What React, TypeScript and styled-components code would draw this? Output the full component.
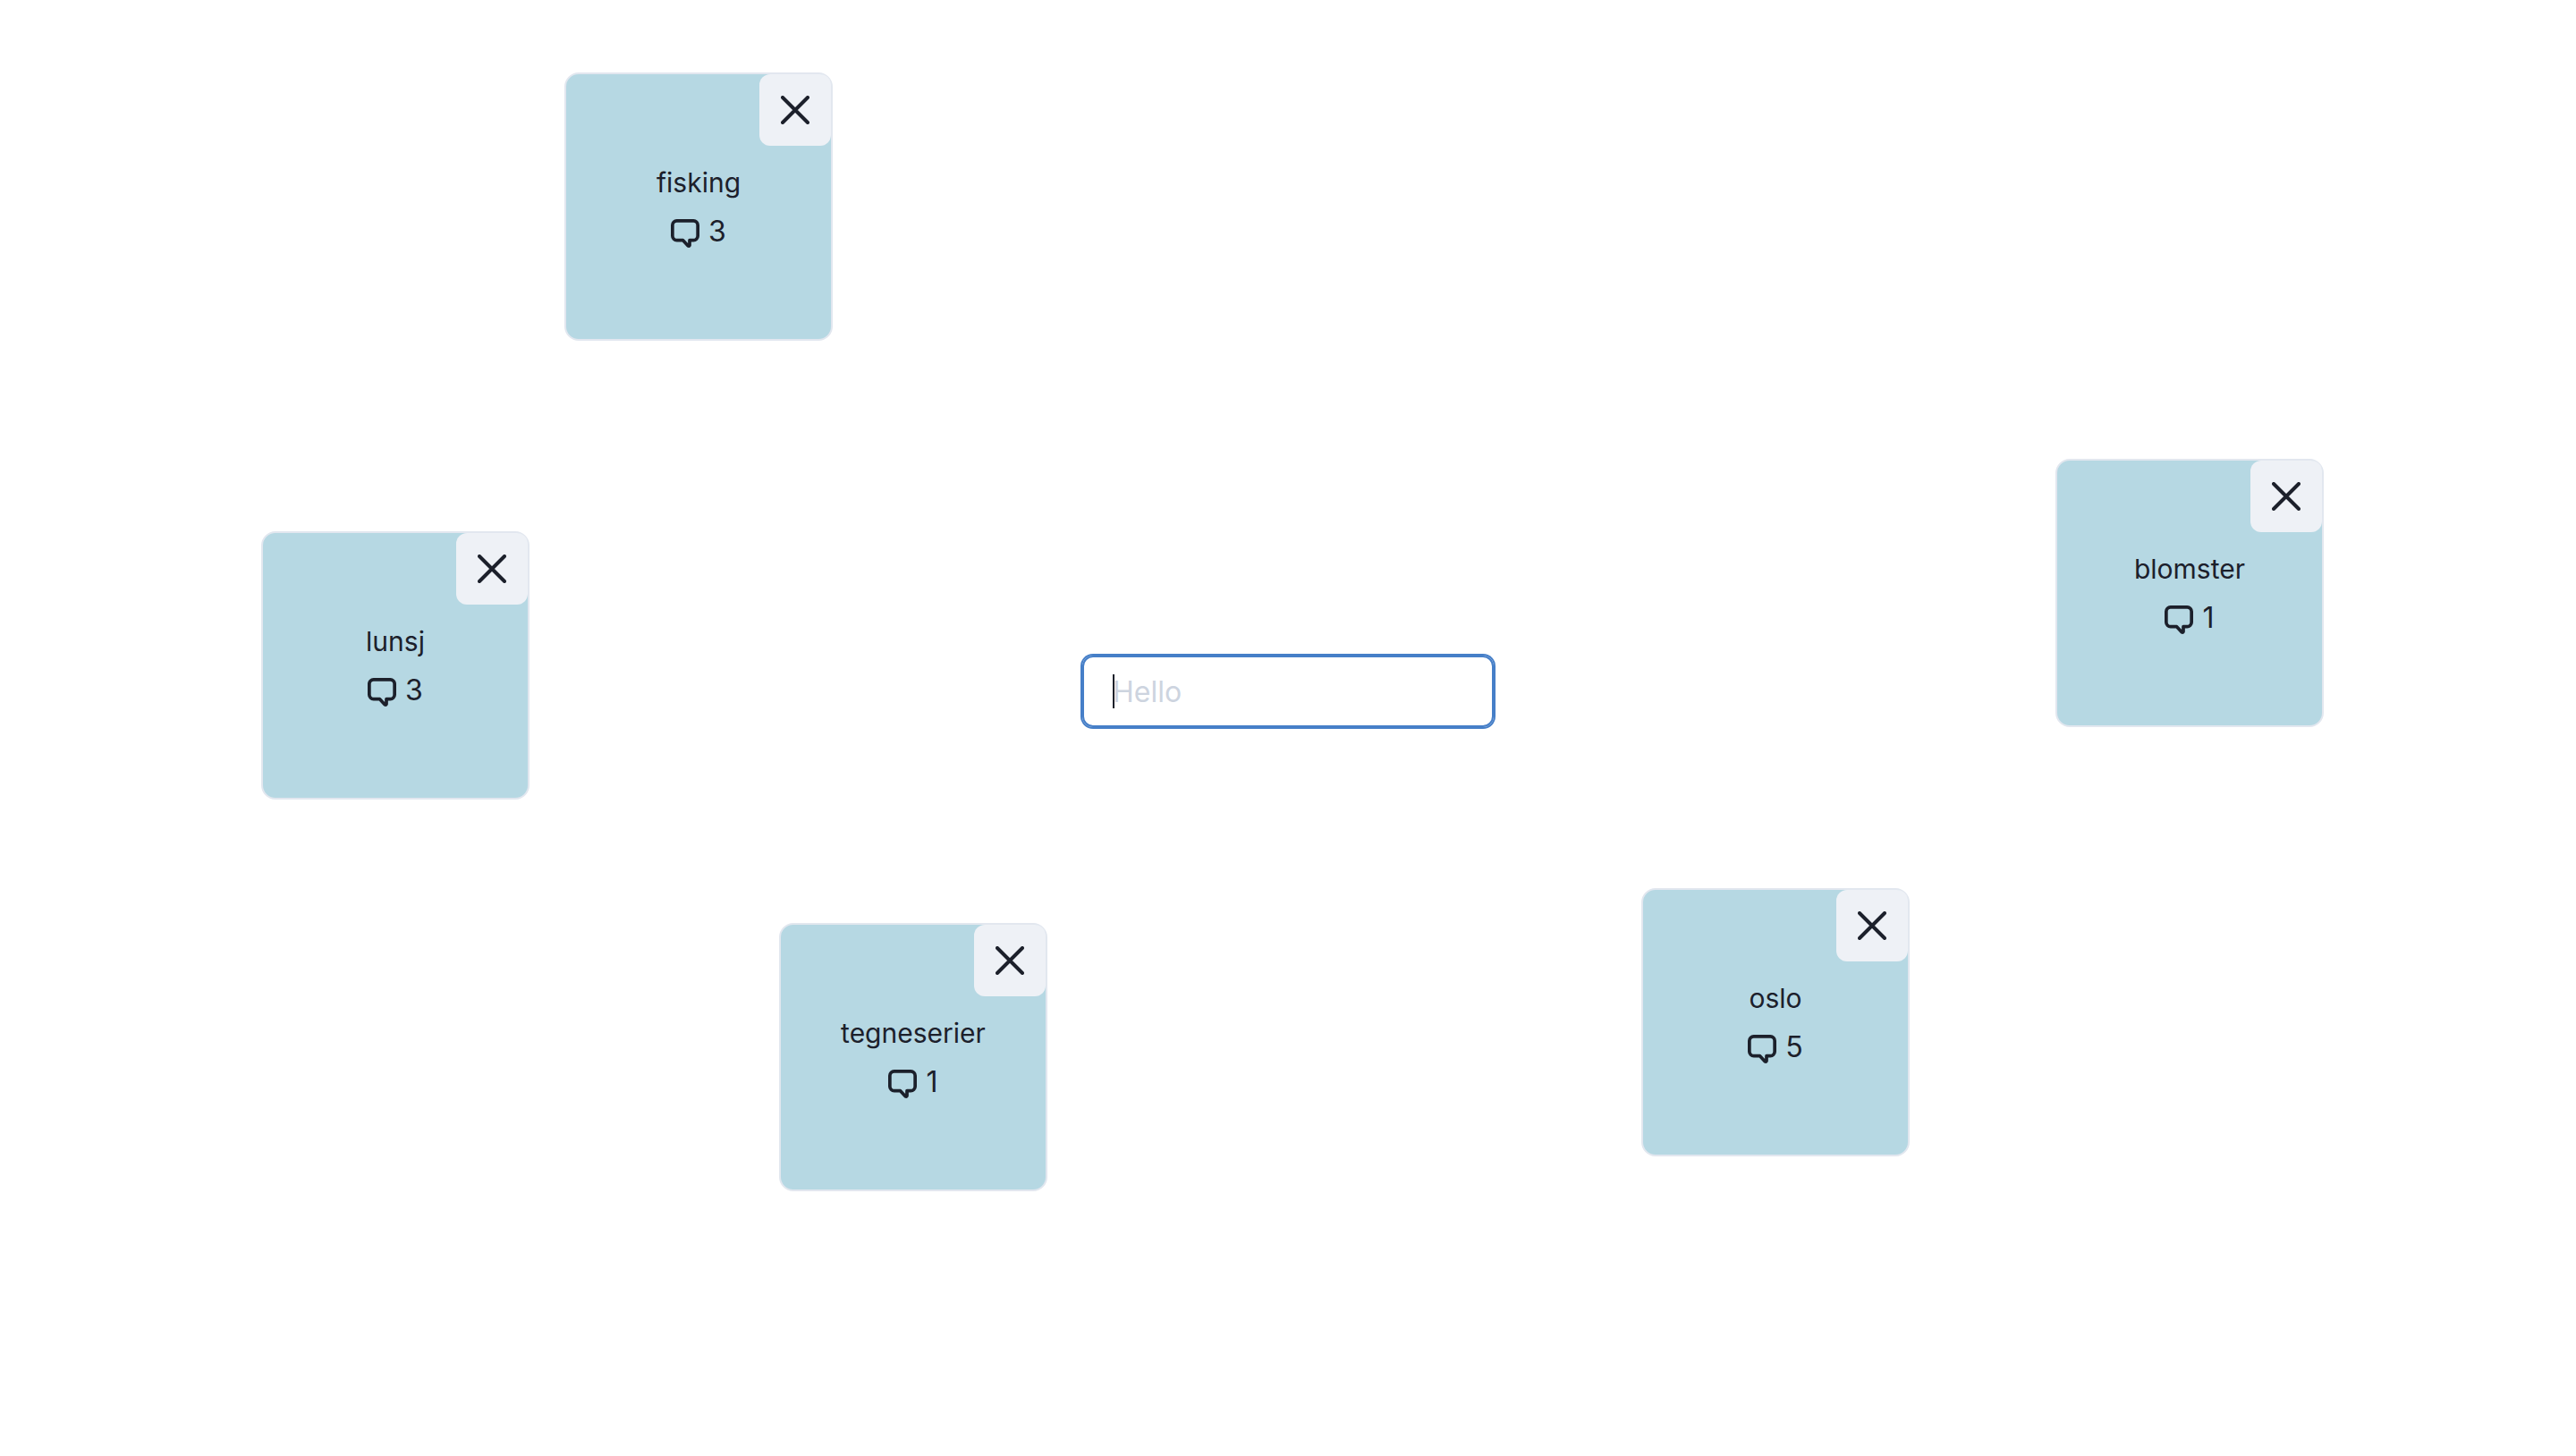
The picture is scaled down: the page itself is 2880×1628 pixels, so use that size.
import { useState } from "react";
import type { FormEvent } from "react";
import styled, { createGlobalStyle } from "styled-components";

type Note = { id: number; title: string; comments: number; x: number; y: number };

const initialNotes: Note[] = [
  { id: 1, title: "fisking", comments: 3, x: 631, y: 81 },
  { id: 2, title: "lunsj", comments: 3, x: 292, y: 594 },
  { id: 3, title: "blomster", comments: 1, x: 2298, y: 513 },
  { id: 4, title: "tegneserier", comments: 1, x: 871, y: 1032 },
  { id: 5, title: "oslo", comments: 5, x: 1835, y: 993 },
];

const GlobalStyle = createGlobalStyle`
  *, *::before, *::after { box-sizing: border-box; }
  body {
    margin: 0;
    background: #ffffff;
    color: #1c202b;
    font-family: Inter, "Liberation Sans", sans-serif;
    font-size: 32px;
    line-height: 48px;
  }
`;

const Board = styled.main`
  position: relative;
  display: grid;
  place-items: center;
  min-height: 100vh;
  padding: 0 32px 82px;
`;

const NewNoteForm = styled.form`
  position: relative;
  width: 100%;
  max-width: 460px;
`;

const TextField = styled.input`
  display: block;
  width: 100%;
  height: 80px;
  padding: 0 32px;
  border: 2px solid #467fc8;
  border-radius: 12px;
  outline: none;
  box-shadow: 0 0 0 2px #467fc8;
  background: transparent;
  color: inherit;
  caret-color: transparent;
  font: inherit;

  &::placeholder {
    color: #cdd4df;
    opacity: 1;
  }
`;

const Caret = styled.span`
  position: absolute;
  top: 21px;
  left: 34px;
  width: 2px;
  height: 38px;
  background: #1c202b;
  pointer-events: none;
`;

const Card = styled.article`
  position: absolute;
  display: flex;
  flex-direction: column;
  align-items: center;
  justify-content: center;
  gap: 6px;
  width: 300px;
  height: 300px;
  border: 2px solid #e2e7ef;
  border-radius: 16px;
  background: #b6d8e3;
`;

const Title = styled.h2`
  margin: 0;
  font-size: 30px;
  font-weight: 400;
  line-height: 50px;
`;

const Comments = styled.div`
  display: flex;
  align-items: center;
  gap: 10px;
`;

const CommentIcon = styled.svg`
  display: block;
  width: 32px;
  height: 36px;
  padding-top: 4px;
`;

const CloseButton = styled.button`
  position: absolute;
  top: 0;
  right: 0;
  display: flex;
  align-items: center;
  justify-content: center;
  width: 80px;
  height: 80px;
  padding: 0;
  border: 0;
  border-radius: 12px;
  background: #eef1f6;
  color: inherit;
  cursor: pointer;
`;

const CrossIcon = styled.svg`
  width: 32px;
  height: 32px;
`;

export default function App() {
  const [notes, setNotes] = useState(initialNotes);
  const [draft, setDraft] = useState("");

  const addNote = (event: FormEvent) => {
    event.preventDefault();
    const title = draft.trim();
    if (!title) return;
    setNotes((list) => [...list, { id: Date.now(), title, comments: 0, x: 1290, y: 120 }]);
    setDraft("");
  };

  return (
    <>
      <GlobalStyle />
      <Board>
        <NewNoteForm onSubmit={addNote}>
          <TextField
            type="text"
            aria-label="Hello"
            placeholder="Hello"
            value={draft}
            onChange={(event) => setDraft(event.target.value)}
            autoFocus
          />
          {draft === "" && <Caret />}
        </NewNoteForm>
        {notes.map((note) => (
          <Card key={note.id} style={{ left: note.x, top: note.y }}>
            <Title>{note.title}</Title>
            <Comments>
              <CommentIcon viewBox="0 0 32 32" fill="none" stroke="currentColor" strokeWidth="3.7" strokeLinejoin="round" aria-hidden="true">
                <path d="M6.8 1.85H25.2A4.9 4.9 0 0 1 30.15 6.8V18.8A4.9 4.9 0 0 1 25.2 23.7H21V29.3Q20.6 30.6 19.4 29.9L13.6 23.7H6.8A4.9 4.9 0 0 1 1.85 18.8V6.8A4.9 4.9 0 0 1 6.8 1.85Z" />
              </CommentIcon>
              <span>{note.comments}</span>
            </Comments>
            <CloseButton
              type="button"
              aria-label={`Fjern ${note.title}`}
              onClick={() => setNotes((list) => list.filter((item) => item.id !== note.id))}
            >
              <CrossIcon viewBox="0 0 32 32" fill="none" stroke="currentColor" strokeWidth="4" strokeLinecap="round" aria-hidden="true">
                <path d="M2 2L30 30M30 2L2 30" />
              </CrossIcon>
            </CloseButton>
          </Card>
        ))}
      </Board>
    </>
  );
}
